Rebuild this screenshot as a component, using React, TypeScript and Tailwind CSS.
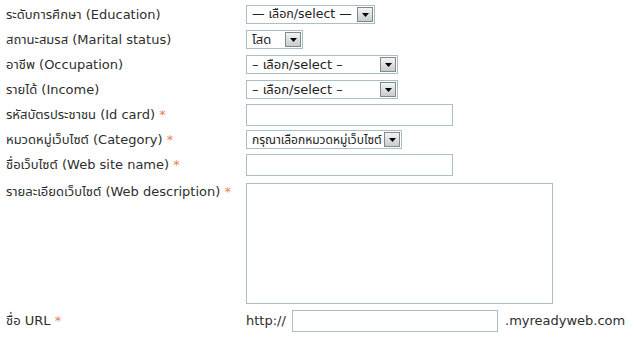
import React from 'react';

const Req = () => <span className="text-[#e8805a]"> *</span>;

const FakeSelect = ({ label, width, text = 'text-[13px]' }: { label: string; width: string; text?: string }) => (
  <div className={`flex h-[19px] items-center justify-between border border-[#a9bec6] bg-white pl-[5px] pr-[1px] ${width}`}>
    <span className={`min-w-0 whitespace-nowrap leading-none text-[#222] ${text}`}>{label}</span>
    <span className="flex h-[15px] w-[16px] shrink-0 items-center justify-center border border-[#7d8a90] bg-gradient-to-b from-[#f4f4f4] to-[#c9cbcc]">
      <svg width="7" height="4" viewBox="0 0 7 4">
        <path d="M0 0h7L3.5 4z" fill="#000" />
      </svg>
    </span>
  </div>
);

const Row = ({ label, children, h = 'h-[25px]' }: { label: React.ReactNode; children: React.ReactNode; h?: string }) => (
  <div className={`flex items-center ${h}`}>
    <div className="w-[246px] shrink-0 whitespace-nowrap pl-[6px]">{label}</div>
    {children}
  </div>
);

export default function App() {
  return (
    <div className="h-[345px] w-[635px] bg-white pt-[2px] font-['DejaVu_Sans','Noto_Sans_Thai',sans-serif] text-[13px] text-[#2e2e2e]">
      <Row label="ระดับการศึกษา (Education)">
        <FakeSelect label="— เลือก/select —" width="w-[129px]" text="text-[12.5px]" />
      </Row>
      <Row label="สถานะสมรส (Marital status)">
        <FakeSelect label="โสด" width="w-[57px]" />
      </Row>
      <Row label="อาชีพ (Occupation)">
        <FakeSelect label="– เลือก/select –" width="w-[152px]" />
      </Row>
      <Row label="รายได้ (Income)">
        <FakeSelect label="– เลือก/select –" width="w-[152px]" />
      </Row>
      <Row label={<>รหัสบัตรประชาชน (Id card)<Req /></>}>
        <input className="h-[22px] w-[207px] border border-[#a9bec6] outline-none" />
      </Row>
      <Row label={<>หมวดหมู่เว็บไซต์ (Category)<Req /></>}>
        <FakeSelect label="กรุณาเลือกหมวดหมู่เว็บไซต์" width="w-[156px]" text="text-[12px]" />
      </Row>
      <Row label={<>ชื่อเว็บไซต์ (Web site name)<Req /></>}>
        <input className="h-[22px] w-[207px] border border-[#a9bec6] outline-none" />
      </Row>
      <div className="mt-[6px] flex">
        <div className="w-[246px] shrink-0 whitespace-nowrap pl-[6px] pt-[1px] leading-[16px]">
          รายละเอียดเว็บไซต์ (Web description)<Req />
        </div>
        <textarea className="h-[121px] w-[307px] resize-none border border-[#a9bec6] outline-none" />
      </div>
      <Row label={<>ชื่อ URL<Req /></>} h="h-[29px] mt-[2px]">
        <span className="w-[46px]">http://</span>
        <input className="h-[22px] w-[206px] border border-[#a9bec6] outline-none" />
        <span className="ml-[7px]">.myreadyweb.com</span>
      </Row>
    </div>
  );
}
